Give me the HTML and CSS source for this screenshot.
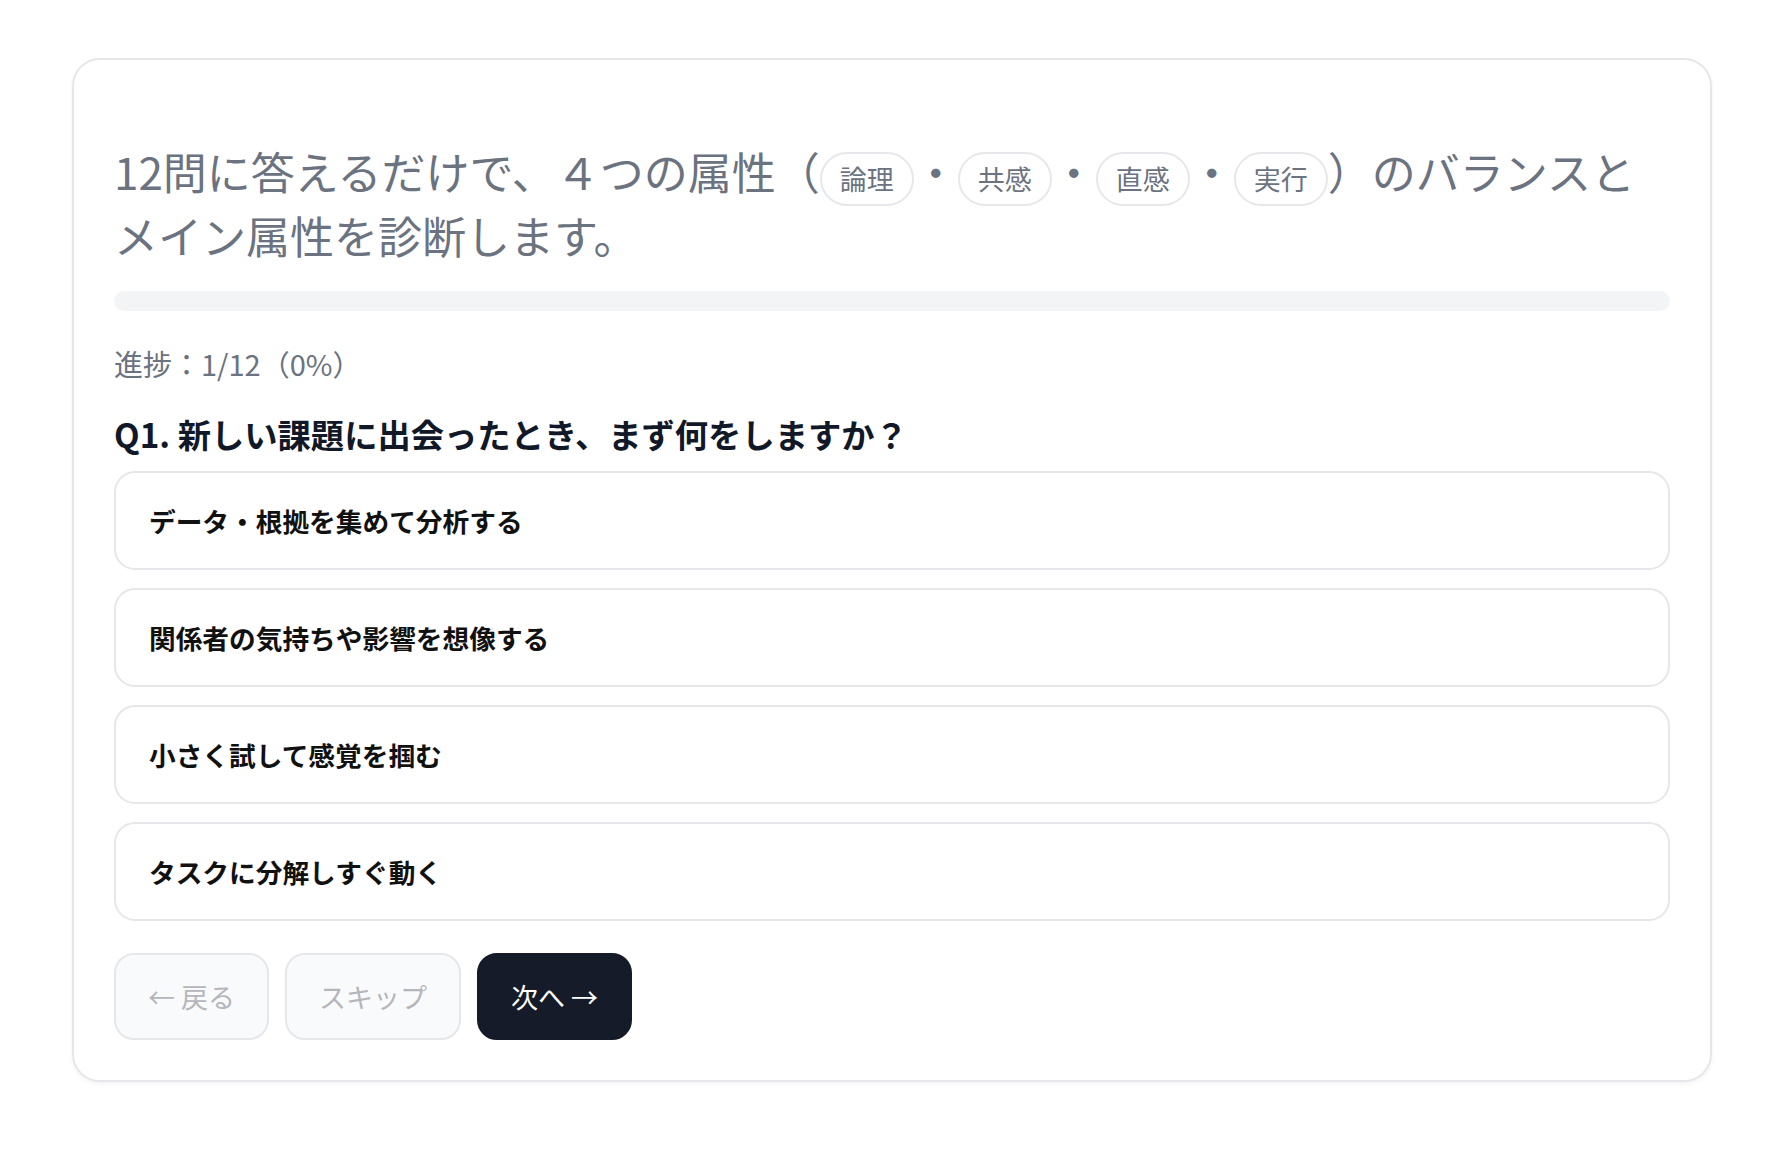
FILE: index.html
```html
<!DOCTYPE html>
<html lang="ja">
<head>
<meta charset="utf-8">
<title>属性診断</title>
<link rel="stylesheet" href="styles.css">
</head>
<body>
<main class="page">
  <section class="card">
    <p class="lead">12問に答えるだけで、４つの属性（<span class="chip">論理</span>・<span class="chip">共感</span>・<span class="chip">直感</span>・<span class="chip">実行</span>）のバランスとメイン属性を診断します。</p>
    <div class="progress"><div class="progress-fill" style="width:0%"></div></div>
    <p class="progress-text">進捗：1/12（0%）</p>
    <h2 class="question">Q1. 新しい課題に出会ったとき、まず何をしますか？</h2>
    <div class="options">
      <button class="option">データ・根拠を集めて分析する</button>
      <button class="option">関係者の気持ちや影響を想像する</button>
      <button class="option">小さく試して感覚を掴む</button>
      <button class="option">タスクに分解しすぐ動く</button>
    </div>
    <div class="actions">
      <button class="btn btn-ghost" disabled>← 戻る</button>
      <button class="btn btn-ghost" disabled>スキップ</button>
      <button class="btn btn-primary">次へ →</button>
    </div>
  </section>
</main>
</body>
</html>
```
FILE: styles.css
```css
* { box-sizing: border-box; }
html, body { margin: 0; padding: 0; background: #ffffff; }
body {
  font-family: "Noto Sans CJK JP", "Noto Sans", sans-serif;
  color: #111827;
}
.page {
  padding: 58px 78px 40px 72px;
}
.card {
  background: #fff;
  border: 2px solid #e5e7eb;
  border-radius: 28px;
  padding: 40px;
  box-shadow: 0 2px 4px rgba(17, 24, 39, 0.05);
}
.lead {
  margin: 41px 0 0;
  font-size: 44px;
  line-height: 60px;
  font-weight: 400;
  color: #6b7280;
}
.chip {
  display: inline-block;
  height: 54px;
  line-height: 50px;
  padding: 0 18px;
  border: 2px solid #e5e7eb;
  border-radius: 999px;
  font-size: 27px;
  color: #6b7280;
  vertical-align: middle;
  position: relative;
  top: 1px;
}
.progress {
  margin-top: 26px;
  height: 20px;
  border-radius: 999px;
  background: #f3f4f6;
  overflow: hidden;
}
.progress-fill {
  height: 100%;
  background: #111827;
}
.progress-text {
  margin: 32px 0 0;
  font-size: 29px;
  line-height: 40px;
  color: #6b7280;
}
.question {
  margin: 28px 0 0;
  font-size: 33.3px;
  line-height: 46px;
  font-weight: 700;
  color: #111827;
}
.options {
  margin-top: 14px;
  display: flex;
  flex-direction: column;
  gap: 18px;
}
.option {
  display: block;
  width: 100%;
  height: 99px;
  padding: 0 33px;
  text-align: left;
  background: #fff;
  border: 2px solid #e5e7eb;
  border-radius: 21px;
  font-family: inherit;
  font-size: 26.7px;
  font-weight: 700;
  color: #111111;
}
.actions {
  margin-top: 32px;
  display: flex;
  gap: 16px;
}
.btn {
  height: 87px;
  padding: 0 32px;
  border-radius: 20px;
  font-family: inherit;
  font-size: 27px;
  font-weight: 400;
}
.btn-ghost {
  background: #f9fafb;
  border: 2px solid #e5e7eb;
  color: #b4b6bb;
}
.btn-primary {
  background: #151b28;
  border: 2px solid #151b28;
  color: #ffffff;
}
```
